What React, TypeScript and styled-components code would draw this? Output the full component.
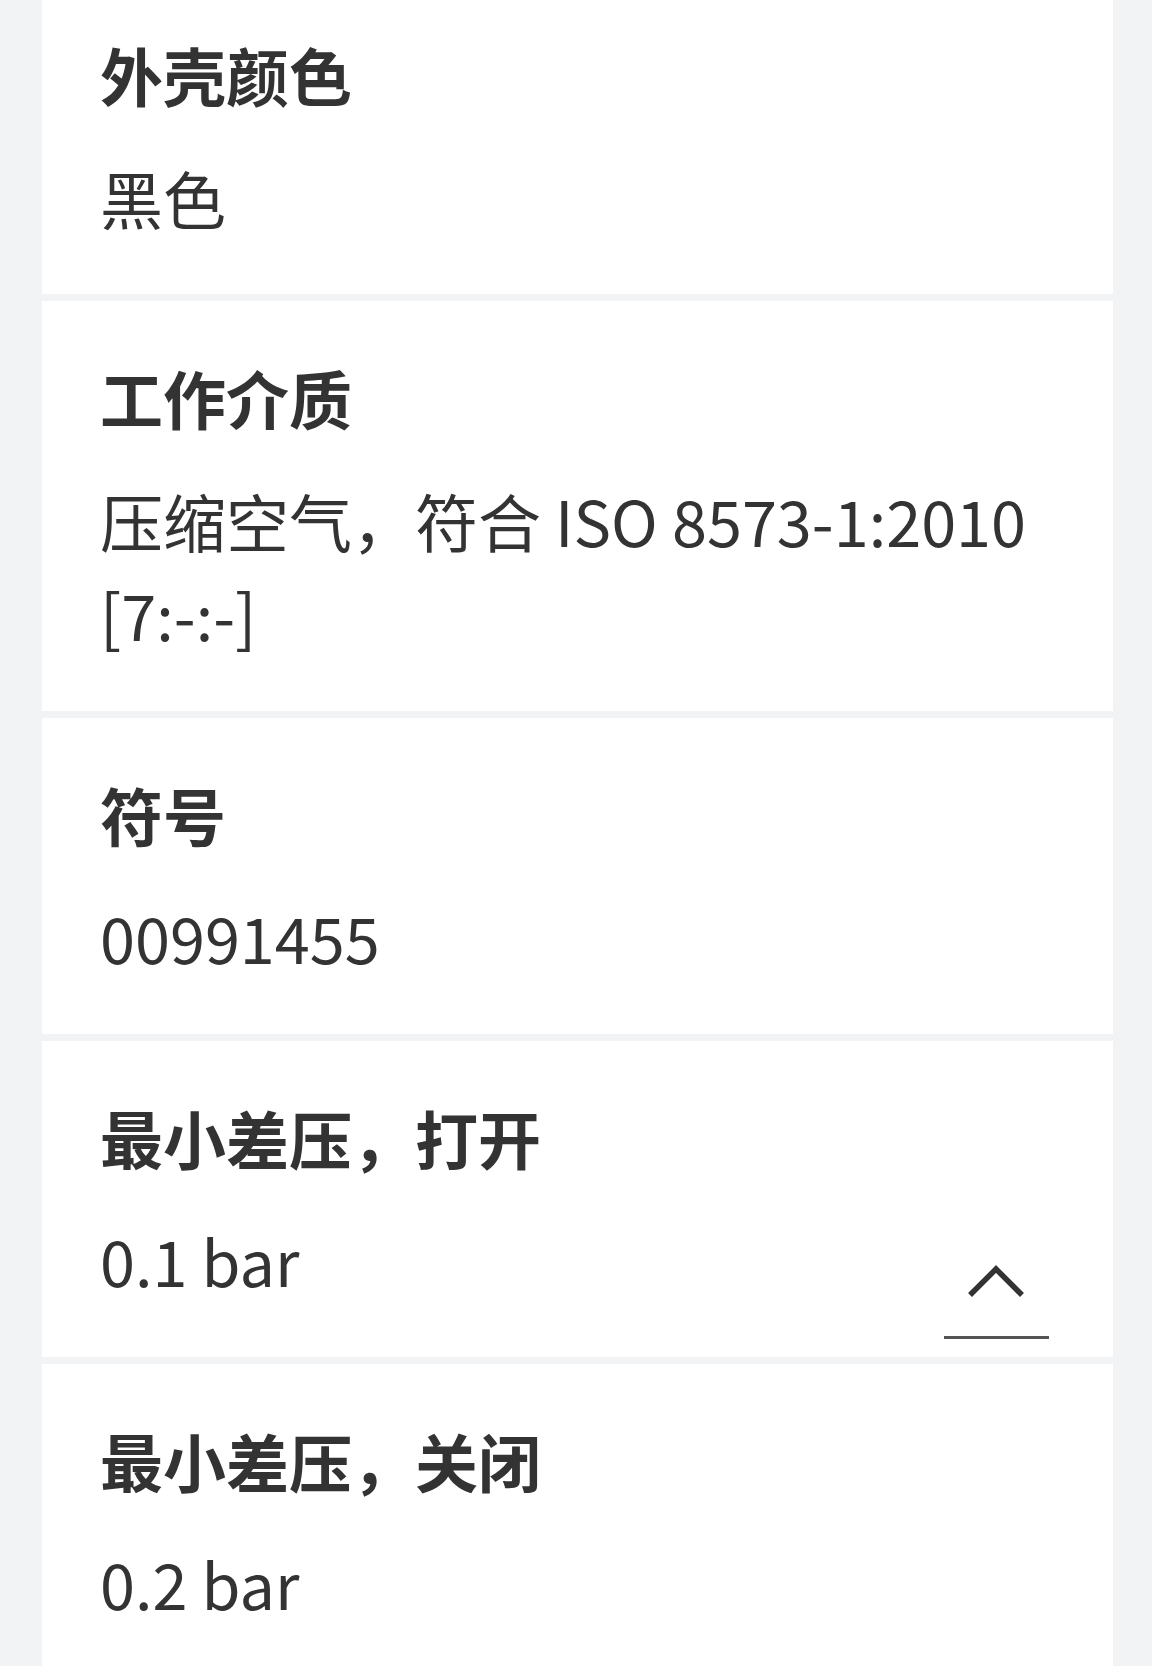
import React from "react";
import styled, { createGlobalStyle } from "styled-components";

const specs = [
  { label: "外壳颜色", value: ["黑色"] },
  { label: "工作介质", value: ["压缩空气，符合 ISO 8573-1:2010", "[7:-:-]"] },
  { label: "符号", value: ["00991455"] },
  { label: "最小差压，打开", value: ["0.1 bar"], backToTop: true },
  { label: "最小差压，关闭", value: ["0.2 bar"] },
];

const GlobalStyle = createGlobalStyle`
  body {
    margin: 0;
    background: #f1f3f4;
    font-family: "Noto Sans CJK SC", "Noto Sans", sans-serif;
    color: #333333;
    overflow: hidden;
  }
`;

const Page = styled.div`
  height: 1666px;
  overflow: hidden;
`;

const List = styled.div`
  display: flex;
  flex-direction: column;
  gap: 7px;
  margin: -22px 39px 0 42px;
`;

const Card = styled.section`
  position: relative;
  background: #ffffff;
  padding: 49px 58px 50px;
`;

const Label = styled.h3`
  margin: 0 0 30px;
  font-size: 63px;
  line-height: 93px;
  font-weight: 700;
  color: #333333;
`;

const Value = styled.div`
  font-size: 63px;
  line-height: 94px;
  font-weight: 400;
  color: #333333;
`;

const TopButton = styled.button`
  position: absolute;
  right: 64px;
  bottom: 18px;
  width: 105px;
  padding: 0 0 36px;
  border: none;
  border-bottom: 3px solid #555555;
  background: transparent;
  display: flex;
  justify-content: center;
  cursor: pointer;

  svg {
    display: block;
    margin-left: -2px;
  }
`;

const ChevronUp = () => (
  <svg width="60" height="36" viewBox="0 0 60 36">
    <polyline
      points="4,31 30,5 56,31"
      fill="none"
      stroke="#333333"
      strokeWidth="5.5"
      strokeLinecap="butt"
      strokeLinejoin="miter"
    />
  </svg>
);

const App = () => (
  <Page>
    <GlobalStyle />
    <List>
      {specs.map((s) => (
        <Card key={s.label}>
          <Label>{s.label}</Label>
          {s.value.map((v) => (
            <Value key={v}>{v}</Value>
          ))}
          {s.backToTop && (
            <TopButton aria-label="返回顶部">
              <ChevronUp />
            </TopButton>
          )}
        </Card>
      ))}
    </List>
  </Page>
);

export default App;
